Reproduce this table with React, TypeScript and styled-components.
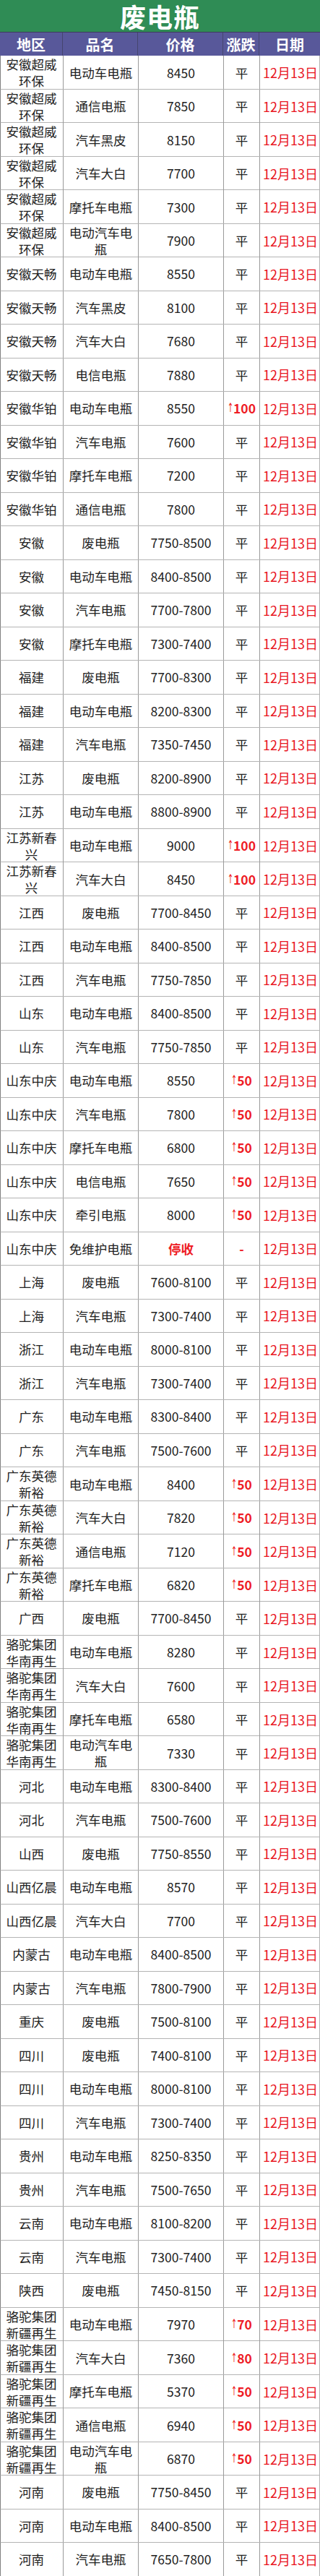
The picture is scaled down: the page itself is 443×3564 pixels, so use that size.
import styled, { createGlobalStyle } from 'styled-components';

type Row = [string, string, string, string];

const rows: Row[] = [
  ['安徽超威环保', '电动车电瓶', '8450', '平'],
  ['安徽超威环保', '通信电瓶', '7850', '平'],
  ['安徽超威环保', '汽车黑皮', '8150', '平'],
  ['安徽超威环保', '汽车大白', '7700', '平'],
  ['安徽超威环保', '摩托车电瓶', '7300', '平'],
  ['安徽超威环保', '电动汽车电瓶', '7900', '平'],
  ['安徽天畅', '电动车电瓶', '8550', '平'],
  ['安徽天畅', '汽车黑皮', '8100', '平'],
  ['安徽天畅', '汽车大白', '7680', '平'],
  ['安徽天畅', '电信电瓶', '7880', '平'],
  ['安徽华铂', '电动车电瓶', '8550', '↑100'],
  ['安徽华铂', '汽车电瓶', '7600', '平'],
  ['安徽华铂', '摩托车电瓶', '7200', '平'],
  ['安徽华铂', '通信电瓶', '7800', '平'],
  ['安徽', '废电瓶', '7750-8500', '平'],
  ['安徽', '电动车电瓶', '8400-8500', '平'],
  ['安徽', '汽车电瓶', '7700-7800', '平'],
  ['安徽', '摩托车电瓶', '7300-7400', '平'],
  ['福建', '废电瓶', '7700-8300', '平'],
  ['福建', '电动车电瓶', '8200-8300', '平'],
  ['福建', '汽车电瓶', '7350-7450', '平'],
  ['江苏', '废电瓶', '8200-8900', '平'],
  ['江苏', '电动车电瓶', '8800-8900', '平'],
  ['江苏新春兴', '电动车电瓶', '9000', '↑100'],
  ['江苏新春兴', '汽车大白', '8450', '↑100'],
  ['江西', '废电瓶', '7700-8450', '平'],
  ['江西', '电动车电瓶', '8400-8500', '平'],
  ['江西', '汽车电瓶', '7750-7850', '平'],
  ['山东', '电动车电瓶', '8400-8500', '平'],
  ['山东', '汽车电瓶', '7750-7850', '平'],
  ['山东中庆', '电动车电瓶', '8550', '↑50'],
  ['山东中庆', '汽车电瓶', '7800', '↑50'],
  ['山东中庆', '摩托车电瓶', '6800', '↑50'],
  ['山东中庆', '电信电瓶', '7650', '↑50'],
  ['山东中庆', '牵引电瓶', '8000', '↑50'],
  ['山东中庆', '免维护电瓶', '停收', '-'],
  ['上海', '废电瓶', '7600-8100', '平'],
  ['上海', '汽车电瓶', '7300-7400', '平'],
  ['浙江', '电动车电瓶', '8000-8100', '平'],
  ['浙江', '汽车电瓶', '7300-7400', '平'],
  ['广东', '电动车电瓶', '8300-8400', '平'],
  ['广东', '汽车电瓶', '7500-7600', '平'],
  ['广东英德新裕', '电动车电瓶', '8400', '↑50'],
  ['广东英德新裕', '汽车大白', '7820', '↑50'],
  ['广东英德新裕', '通信电瓶', '7120', '↑50'],
  ['广东英德新裕', '摩托车电瓶', '6820', '↑50'],
  ['广西', '废电瓶', '7700-8450', '平'],
  ['骆驼集团华南再生', '电动车电瓶', '8280', '平'],
  ['骆驼集团华南再生', '汽车大白', '7600', '平'],
  ['骆驼集团华南再生', '摩托车电瓶', '6580', '平'],
  ['骆驼集团华南再生', '电动汽车电瓶', '7330', '平'],
  ['河北', '电动车电瓶', '8300-8400', '平'],
  ['河北', '汽车电瓶', '7500-7600', '平'],
  ['山西', '废电瓶', '7750-8550', '平'],
  ['山西亿晨', '电动车电瓶', '8570', '平'],
  ['山西亿晨', '汽车大白', '7700', '平'],
  ['内蒙古', '电动车电瓶', '8400-8500', '平'],
  ['内蒙古', '汽车电瓶', '7800-7900', '平'],
  ['重庆', '废电瓶', '7500-8100', '平'],
  ['四川', '废电瓶', '7400-8100', '平'],
  ['四川', '电动车电瓶', '8000-8100', '平'],
  ['四川', '汽车电瓶', '7300-7400', '平'],
  ['贵州', '电动车电瓶', '8250-8350', '平'],
  ['贵州', '汽车电瓶', '7500-7650', '平'],
  ['云南', '电动车电瓶', '8100-8200', '平'],
  ['云南', '汽车电瓶', '7300-7400', '平'],
  ['陕西', '废电瓶', '7450-8150', '平'],
  ['骆驼集团新疆再生', '电动车电瓶', '7970', '↑70'],
  ['骆驼集团新疆再生', '汽车大白', '7360', '↑80'],
  ['骆驼集团新疆再生', '摩托车电瓶', '5370', '↑50'],
  ['骆驼集团新疆再生', '通信电瓶', '6940', '↑50'],
  ['骆驼集团新疆再生', '电动汽车电瓶', '6870', '↑50'],
  ['河南', '废电瓶', '7750-8450', '平'],
  ['河南', '电动车电瓶', '8400-8500', '平'],
  ['河南', '汽车电瓶', '7650-7800', '平'],
];

const headers = ['地区', '品名', '价格', '涨跌', '日期'];

const Change = ({ value }: { value: string }) => {
  if (!value.startsWith('↑')) return <>{value}</>;
  return (
    <>
      <Arrow>↑</Arrow>
      {value.slice(1)}
    </>
  );
};

export default function App() {
  return (
    <>
      <GlobalStyle />
      <Sheet>
        <Title>废电瓶</Title>
        <HeaderRow>
          {headers.map((h) => (
            <HeaderCell key={h}>{h}</HeaderCell>
          ))}
        </HeaderRow>
        {rows.map(([region, name, price, change], i) => (
          <DataRow key={i}>
            <Cell>{region}</Cell>
            <Cell>{name}</Cell>
            <Cell $alert={price === '停收'}>{price}</Cell>
            <Cell $alert={change.startsWith('↑') || change === '-'}>
              <Change value={change} />
            </Cell>
            <DateCell>12月13日</DateCell>
          </DataRow>
        ))}
      </Sheet>
    </>
  );
}

const GlobalStyle = createGlobalStyle`
  body {
    margin: 0;
    background: #fff;
    font-family: "Noto Sans CJK SC", "Noto Sans", sans-serif;
  }
`;

const Sheet = styled.div`
  width: 443px;
  display: flex;
  flex-direction: column;
`;

const Title = styled.div`
  height: 45px;
  background: #2f8c55;
  color: #fff;
  font-size: 36px;
  font-weight: 700;
  line-height: 45px;
  text-align: center;
  letter-spacing: 1px;
  border-bottom: 1px solid #3c3c5c;
  box-sizing: border-box;
`;

const grid = `
  display: grid;
  grid-template-columns: 87px 104px 118px 50px 84px;
`;

const HeaderRow = styled.div`
  ${grid};
  height: 32px;
  background: #58589a;
`;

const HeaderCell = styled.div`
  display: flex;
  align-items: center;
  justify-content: center;
  color: #fff;
  font-size: 20px;
  font-weight: 700;
  border-right: 1px solid #45456f;
  &:last-child {
    border-right: none;
  }
`;

const DataRow = styled.div`
  ${grid};
  height: 46.5px;
  box-sizing: border-box;
  border-bottom: 1px solid #b4b4b4;
  border-left: 1px solid #808080;
  border-right: 1px solid #b4b4b4;
`;

const Cell = styled.div<{ $alert?: boolean }>`
  display: flex;
  align-items: center;
  justify-content: center;
  text-align: center;
  padding: 0 4px;
  font-size: 17.5px;
  line-height: 23px;
  color: ${({ $alert }) => ($alert ? '#ee1c25' : '#222')};
  font-weight: ${({ $alert }) => ($alert ? 700 : 400)};
  border-right: 1px solid #9a9a9a;
  white-space: nowrap;
  flex-wrap: nowrap;
  &:first-child,
  &:nth-child(2) {
    white-space: normal;
  }
  &:first-child {
    margin-left: -1px;
  }
`;

const Arrow = styled.span`
  font-family: "DejaVu Sans", "Liberation Sans", sans-serif;
  font-weight: 400;
  display: inline-flex;
  justify-content: center;
  width: 8px;
  transform: scaleX(0.55);
`;

const DateCell = styled.div`
  display: flex;
  align-items: center;
  justify-content: center;
  font-size: 18px;
  color: #e8141e;
  white-space: nowrap;
`;
